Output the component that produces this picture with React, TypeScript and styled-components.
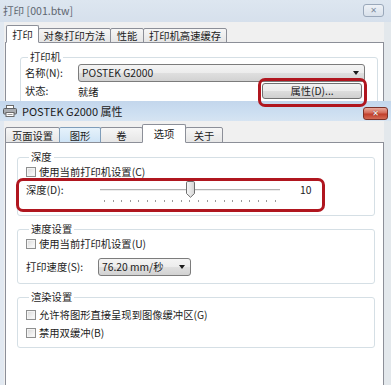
import React from "react";
import styled, { createGlobalStyle, css } from "styled-components";

const GlobalStyle = createGlobalStyle`
  html, body { margin: 0; padding: 0; background: #ffffff; }
  body {
    font-family: "Noto Sans CJK SC", "Noto Sans", sans-serif;
    font-size: 10.3px;
    color: #1c1c1c;
  }
  * { box-sizing: border-box; }
`;

const Desktop = styled.div`
  position: relative;
  width: 391px;
  height: 385px;
  overflow: hidden;
  background: #f0f0f0;
`;

const Window = styled.div<{ $top: number; $height: number; $active?: boolean }>`
  position: absolute;
  left: 0;
  top: ${(p) => p.$top}px;
  width: 391px;
  height: ${(p) => p.$height}px;
  display: flex;
  flex-direction: column;
  background: ${(p) => (p.$active ? "#d3e1f0" : "#dae3ee")};
`;

const TitleBar = styled.div<{ $h: number; $active?: boolean }>`
  height: ${(p) => p.$h}px;
  flex: none;
  display: flex;
  align-items: center;
  padding: 0 3px 0 3px;
  gap: 5px;
  background: ${(p) =>
    p.$active
      ? "linear-gradient(#c3d6ec, #cddff1 60%, #d6e4f2)"
      : "linear-gradient(#dde6f0, #d6e0ec)"};
`;

const TitleText = styled.span<{ $active?: boolean }>`
  font-size: ${(p) => (p.$active ? "11px" : "10.6px")};
  line-height: 14px;
  color: ${(p) => (p.$active ? "#1a1a1a" : "#5f6670")};
  flex: 1;
  white-space: nowrap;
`;

const CloseButton = styled.div<{ $active?: boolean; $w: number; $dy: number; $mr: number }>`
  width: ${(p) => p.$w}px;
  height: 13px;
  margin-top: ${(p) => p.$dy}px;
  margin-right: ${(p) => p.$mr}px;
  border-radius: 3px;
  display: flex;
  align-items: center;
  justify-content: center;
  font-family: "DejaVu Sans", sans-serif;
  font-size: 8px;
  font-weight: bold;
  ${(p) =>
    p.$active
      ? css`
          border: 1px solid #7a3128;
          background: linear-gradient(#e9a99c, #d46a58 45%, #c13e2b 55%, #d46b55);
          color: #ffffff;
          text-shadow: 0 0 1px #5a1a12;
        `
      : css`
          border: 1px solid #9aa8ba;
          background: linear-gradient(#eef2f7, #d9e1eb);
          color: #7c8a9c;
        `}
`;

const Body = styled.div`
  flex: 1;
  display: flex;
  flex-direction: column;
  background: #f0f0f0;
  border-left: 4px solid #e2e9f1;
  border-right: 7px solid #e3e8ec;
  padding: 0 0 0 1px;
  min-height: 0;
`;

const TabStrip = styled.div<{ $h: number; $pl: number }>`
  height: ${(p) => p.$h}px;
  flex: none;
  display: flex;
  align-items: flex-end;
  padding-left: ${(p) => p.$pl}px;
  margin-bottom: -1px;
  position: relative;
  z-index: 1;
`;

const Tab = styled.div<{ $w: number; $h: number; $state?: "active" | "hover" | "normal" }>`
  width: ${(p) => p.$w}px;
  height: ${(p) => p.$h}px;
  flex: none;
  display: flex;
  align-items: center;
  justify-content: center;
  white-space: nowrap;
  line-height: 13px;
  border: 1px solid #8c8f98;
  border-radius: 2px 2px 0 0;
  & + & { margin-left: -1px; }
  ${(p) =>
    p.$state === "active"
      ? css`
          background: #ffffff;
          border-bottom-color: #ffffff;
          position: relative;
          z-index: 2;
        `
      : p.$state === "hover"
      ? css`
          background: linear-gradient(#e6f2fb, #cfe4f6);
          border-color: #7f9db9;
          border-bottom-color: #8c8f98;
          position: relative;
          z-index: 1;
        `
      : css`
          background: linear-gradient(#f6f6f6, #e6e6e6);
        `}
`;

const TabPanel = styled.div<{ $pl: number; $pr: number }>`
  flex: 1;
  background: #ffffff;
  border: 1px solid #8c8f98;
  border-bottom: none;
  padding: 7px ${(p) => p.$pr}px 0 ${(p) => p.$pl}px;
  display: flex;
  flex-direction: column;
  gap: 6px;
`;

const Group = styled.fieldset<{ $pt: number; $pb: number; $pl: number; $pr: number; $gap: number }>`
  margin: 0;
  min-width: 0;
  border: 1px solid #d5dfe5;
  border-radius: 3px;
  padding: ${(p) => p.$pt}px ${(p) => p.$pr}px ${(p) => p.$pb}px ${(p) => p.$pl}px;
  display: flex;
  flex-direction: column;
  gap: ${(p) => p.$gap}px;
`;

const Legend = styled.legend`
  padding: 0 2px;
  margin-left: 3px;
  line-height: 14px;
  font-size: 10.3px;
  color: #1e1e1e;
`;

const Row = styled.div<{ $h: number }>`
  height: ${(p) => p.$h}px;
  display: flex;
  align-items: center;
`;

const FieldLabel = styled.span<{ $w: number }>`
  width: ${(p) => p.$w}px;
  flex: none;
  line-height: 14px;
  white-space: nowrap;
`;

const CheckRow = styled.label`
  height: 16px;
  display: flex;
  align-items: center;
  gap: 3px;
  white-space: nowrap;
  line-height: 14px;
`;

const CheckBox = styled.span`
  width: 10px;
  height: 10px;
  flex: none;
  border: 1px solid #8e8f8f;
  background: linear-gradient(135deg, #d8d8d8, #f4f4f4 70%, #ffffff);
  box-shadow: inset 0 0 0 1px #f4f4f4;
`;

const Combo = styled.div<{ $w?: number }>`
  ${(p) => (p.$w ? `width: ${p.$w}px; flex: none;` : "flex: 1;")}
  height: 18px;
  display: flex;
  align-items: center;
  justify-content: space-between;
  padding: 0 5px 0 3px;
  border: 1px solid #7c7c7c;
  border-radius: 3px;
  background: linear-gradient(#f4f4f4, #ececec 50%, #dfdfdf 51%, #d2d2d2);
  white-space: nowrap;
  line-height: 14px;
`;

const ComboArrow = styled.span`
  width: 0;
  height: 0;
  border-left: 3px solid transparent;
  border-right: 3px solid transparent;
  border-top: 4px solid #1a1a1a;
`;

const PushButton = styled.div`
  width: 100px;
  height: 16px;
  margin-left: auto;
  margin-right: 3px;
  display: flex;
  align-items: center;
  justify-content: center;
  border: 1px solid #707070;
  border-radius: 3px;
  background: linear-gradient(#f3f3f3, #ebebeb 50%, #dddddd 51%, #cfcfcf);
  line-height: 14px;
`;

const SliderRow = styled.div`
  height: 24px;
  display: flex;
  align-items: flex-start;
`;

const SliderLabel = styled.span`
  width: 70px;
  flex: none;
  line-height: 20px;
`;

const SliderBox = styled.div`
  position: relative;
  width: 188px;
  height: 24px;
  flex: none;
`;

const Track = styled.div`
  position: absolute;
  left: 4px;
  right: 4px;
  top: 9px;
  height: 2px;
  border-top: 1px solid #b4b4b4;
  border-bottom: 1px solid #ececec;
  background: #d6d6d6;
`;

const Ticks = styled.div`
  position: absolute;
  left: 8px;
  right: 8px;
  top: 20px;
  height: 2px;
  display: flex;
  justify-content: space-between;
`;

const Tick = styled.span`
  width: 1px;
  height: 2px;
  background: #9a9a9a;
`;

const ThumbSvg = styled.svg`
  position: absolute;
  top: 1px;
`;

const SliderValue = styled.span`
  margin-left: 16px;
  line-height: 20px;
`;

const Annotation = styled.div<{ $x: number; $y: number; $w: number; $h: number }>`
  position: absolute;
  left: ${(p) => p.$x}px;
  top: ${(p) => p.$y}px;
  width: ${(p) => p.$w}px;
  height: ${(p) => p.$h}px;
  border: 3px solid #b0161f;
  border-radius: 7px;
  pointer-events: none;
  z-index: 10;
`;

const PrinterIcon = () => (
  <svg width="14" height="12" viewBox="0 0 14 12">
    <rect x="3.5" y="0.5" width="7" height="4" fill="#ffffff" stroke="#6b6b6b" />
    <rect x="0.5" y="3.5" width="13" height="5.5" rx="1" fill="#a9adb2" stroke="#5c5f63" />
    <rect x="3" y="7.5" width="8" height="4" fill="#ffffff" stroke="#6b6b6b" />
    <line x1="4.5" y1="9.5" x2="9.5" y2="9.5" stroke="#9a9a9a" />
  </svg>
);

const Thumb = ({ left }: { left: number }) => (
  <ThumbSvg width="9" height="17" viewBox="0 0 9 17" style={{ left }}>
    <defs>
      <linearGradient id="thumbg" x1="0" x2="1" y1="0" y2="0">
        <stop offset="0" stopColor="#f8f8f8" />
        <stop offset="1" stopColor="#d4d4d4" />
      </linearGradient>
    </defs>
    <path
      d="M1.8 0.5 H7.2 Q8.5 0.5 8.5 1.8 V12.5 L4.5 16.3 L0.5 12.5 V1.8 Q0.5 0.5 1.8 0.5 Z"
      fill="url(#thumbg)"
      stroke="#6f6f6f"
    />
  </ThumbSvg>
);

export default function App() {
  const depth = 10;
  const depthMax = 20;
  const thumbLeft = 8 + (depth / depthMax) * 172 - 4.5;
  const ticks = Array.from({ length: depthMax + 1 }, (_, i) => i);

  return (
    <>
      <GlobalStyle />
      <Desktop>
        <Window $top={0} $height={130}>
          <TitleBar $h={22}>
            <TitleText>打印 [001.btw]</TitleText>
            <CloseButton $w={21} $dy={-2} $mr={4}>✕</CloseButton>
          </TitleBar>
          <Body>
            <TabStrip $h={21} $pl={1}>
              <Tab $w={33} $h={18} $state="active">打印</Tab>
              <Tab $w={73} $h={15}>对象打印方法</Tab>
              <Tab $w={34} $h={15}>性能</Tab>
              <Tab $w={84} $h={15}>打印机高速缓存</Tab>
            </TabStrip>
            <TabPanel $pl={14} $pr={5}>
              <Group $pt={0} $pb={8} $pl={4} $pr={12} $gap={1}>
                <Legend>打印机</Legend>
                <Row $h={18}>
                  <FieldLabel $w={53}>名称(N):</FieldLabel>
                  <Combo>
                    <span>POSTEK G2000</span>
                    <ComboArrow />
                  </Combo>
                </Row>
                <Row $h={16}>
                  <FieldLabel $w={53}>状态:</FieldLabel>
                  <span>就绪</span>
                  <PushButton>属性(D)...</PushButton>
                </Row>
              </Group>
            </TabPanel>
          </Body>
        </Window>

        <Window $top={101} $height={284} $active>
          <TitleBar $h={20} $active>
            <PrinterIcon />
            <TitleText $active>POSTEK G2000 属性</TitleText>
            <CloseButton $active $w={25} $dy={5} $mr={0}>✕</CloseButton>
          </TitleBar>
          <Body>
            <TabStrip $h={22} $pl={0}>
              <Tab $w={55} $h={16}>页面设置</Tab>
              <Tab $w={42} $h={16} $state="hover">图形</Tab>
              <Tab $w={43} $h={16}>卷</Tab>
              <Tab $w={44} $h={19} $state="active">选项</Tab>
              <Tab $w={38} $h={16}>关于</Tab>
            </TabStrip>
            <TabPanel $pl={11} $pr={8}>
              <Group $pt={0} $pb={11} $pl={8} $pr={8} $gap={0}>
                <Legend>深度</Legend>
                <CheckRow>
                  <CheckBox />
                  <span>使用当前打印机设置(C)</span>
                </CheckRow>
                <SliderRow>
                  <SliderLabel>深度(D):</SliderLabel>
                  <SliderBox>
                    <Track />
                    <Ticks>
                      {ticks.map((t) => (
                        <Tick key={t} />
                      ))}
                    </Ticks>
                    <Thumb left={thumbLeft} />
                  </SliderBox>
                  <SliderValue>{depth}</SliderValue>
                </SliderRow>
              </Group>

              <Group $pt={0} $pb={7} $pl={8} $pr={8} $gap={6}>
                <Legend>速度设置</Legend>
                <CheckRow>
                  <CheckBox />
                  <span>使用当前打印机设置(U)</span>
                </CheckRow>
                <Row $h={18}>
                  <FieldLabel $w={72}>打印速度(S):</FieldLabel>
                  <Combo $w={93}>
                    <span>76.20 mm/秒</span>
                    <ComboArrow />
                  </Combo>
                </Row>
              </Group>

              <Group $pt={3} $pb={6} $pl={8} $pr={8} $gap={2}>
                <Legend>渲染设置</Legend>
                <CheckRow>
                  <CheckBox />
                  <span>允许将图形直接呈现到图像缓冲区(G)</span>
                </CheckRow>
                <CheckRow>
                  <CheckBox />
                  <span>禁用双缓冲(B)</span>
                </CheckRow>
              </Group>
            </TabPanel>
          </Body>
        </Window>

        <Annotation $x={258} $y={78} $w={109} $h={29} />
        <Annotation $x={16} $y={178} $w={309} $h={34} />
      </Desktop>
    </>
  );
}
